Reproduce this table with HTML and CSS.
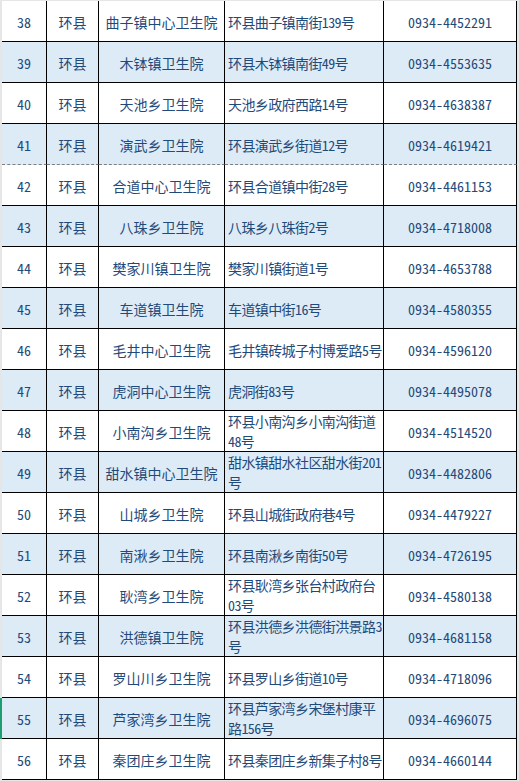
FILE: index.html
```html
<!DOCTYPE html>
<html lang="zh-CN">
<head>
<meta charset="utf-8">
<title>环县卫生院</title>
<link rel="stylesheet" href="styles.css">
</head>
<body>
<div class="sheet">
  <div class="row"><div class="mark"></div><div class="c num">38</div><div class="c">环县</div><div class="c">曲子镇中心卫生院</div><div class="c addr">环县曲子镇南街139号</div><div class="c tel">0934-4452291</div></div>
  <div class="row alt"><div class="mark"></div><div class="c num">39</div><div class="c">环县</div><div class="c">木钵镇卫生院</div><div class="c addr">环县木钵镇南街49号</div><div class="c tel">0934-4553635</div></div>
  <div class="row"><div class="mark"></div><div class="c num">40</div><div class="c">环县</div><div class="c">天池乡卫生院</div><div class="c addr">天池乡政府西路14号</div><div class="c tel">0934-4638387</div></div>
  <div class="row alt dashed"><div class="mark"></div><div class="c num">41</div><div class="c">环县</div><div class="c">演武乡卫生院</div><div class="c addr">环县演武乡街道12号</div><div class="c tel">0934-4619421</div></div>
  <div class="row"><div class="mark"></div><div class="c num">42</div><div class="c">环县</div><div class="c">合道中心卫生院</div><div class="c addr">环县合道镇中街28号</div><div class="c tel">0934-4461153</div></div>
  <div class="row alt"><div class="mark"></div><div class="c num">43</div><div class="c">环县</div><div class="c">八珠乡卫生院</div><div class="c addr">八珠乡八珠街2号</div><div class="c tel">0934-4718008</div></div>
  <div class="row"><div class="mark"></div><div class="c num">44</div><div class="c">环县</div><div class="c">樊家川镇卫生院</div><div class="c addr">樊家川镇街道1号</div><div class="c tel">0934-4653788</div></div>
  <div class="row alt"><div class="mark"></div><div class="c num">45</div><div class="c">环县</div><div class="c">车道镇卫生院</div><div class="c addr">车道镇中街16号</div><div class="c tel">0934-4580355</div></div>
  <div class="row"><div class="mark"></div><div class="c num">46</div><div class="c">环县</div><div class="c">毛井中心卫生院</div><div class="c addr">毛井镇砖城子村博爱路5号</div><div class="c tel">0934-4596120</div></div>
  <div class="row alt"><div class="mark"></div><div class="c num">47</div><div class="c">环县</div><div class="c">虎洞中心卫生院</div><div class="c addr">虎洞街83号</div><div class="c tel">0934-4495078</div></div>
  <div class="row"><div class="mark"></div><div class="c num">48</div><div class="c">环县</div><div class="c">小南沟乡卫生院</div><div class="c addr two">环县小南沟乡小南沟街道<br>48号</div><div class="c tel">0934-4514520</div></div>
  <div class="row alt"><div class="mark"></div><div class="c num">49</div><div class="c">环县</div><div class="c">甜水镇中心卫生院</div><div class="c addr two">甜水镇甜水社区甜水街201<br>号</div><div class="c tel">0934-4482806</div></div>
  <div class="row"><div class="mark"></div><div class="c num">50</div><div class="c">环县</div><div class="c">山城乡卫生院</div><div class="c addr">环县山城街政府巷4号</div><div class="c tel">0934-4479227</div></div>
  <div class="row alt"><div class="mark"></div><div class="c num">51</div><div class="c">环县</div><div class="c">南湫乡卫生院</div><div class="c addr">环县南湫乡南街50号</div><div class="c tel">0934-4726195</div></div>
  <div class="row"><div class="mark"></div><div class="c num">52</div><div class="c">环县</div><div class="c">耿湾乡卫生院</div><div class="c addr two">环县耿湾乡张台村政府台<br>03号</div><div class="c tel">0934-4580138</div></div>
  <div class="row alt"><div class="mark"></div><div class="c num">53</div><div class="c">环县</div><div class="c">洪德镇卫生院</div><div class="c addr two">环县洪德乡洪德街洪景路3<br>号</div><div class="c tel">0934-4681158</div></div>
  <div class="row"><div class="mark"></div><div class="c num">54</div><div class="c">环县</div><div class="c">罗山川乡卫生院</div><div class="c addr">环县罗山乡街道10号</div><div class="c tel">0934-4718096</div></div>
  <div class="row alt selected"><div class="mark"></div><div class="c num">55</div><div class="c">环县</div><div class="c">芦家湾乡卫生院</div><div class="c addr two">环县芦家湾乡宋堡村康平<br>路156号</div><div class="c tel">0934-4696075</div></div>
  <div class="row"><div class="mark"></div><div class="c num">56</div><div class="c">环县</div><div class="c">秦团庄乡卫生院</div><div class="c addr">环县秦团庄乡新集子村8号</div><div class="c tel">0934-4660144</div></div>
</div>
</body>
</html>
```

FILE: styles.css
```css
html, body {
  margin: 0;
  padding: 0;
  background: #e6e6e6;
}

.sheet {
  margin-top: 1px;
  width: 517px;
  font-family: "Noto Sans CJK SC", sans-serif;
  font-feature-settings: "hwid" 1;
  font-size: 14px;
  color: #1f4a7a;
}

.row {
  display: grid;
  grid-template-columns: 2px 45px 52px 126px 159px 133px;
  height: 41px;
  background: #ffffff;
}

.row.alt {
  background: #ddebf7;
}

.mark {
  background: #e6e6e6;
}

.row.selected .mark {
  background: #1e9e6e;
}

.c {
  box-sizing: border-box;
  border-right: 1px solid #000;
  border-bottom: 1px solid #000;
  display: flex;
  align-items: center;
  justify-content: center;
  text-align: center;
  white-space: nowrap;
  line-height: 17px;
  padding-top: 2px;
}

.row.dashed .c {
  border-bottom: 1px dashed #7f7f7f;
}

.c.addr {
  justify-content: flex-start;
  text-align: left;
  padding-left: 3px;
  padding-top: 3px;
  letter-spacing: -0.6px;
}

.c.addr.two {
  line-height: 20px;
  padding-top: 0;
}
```
